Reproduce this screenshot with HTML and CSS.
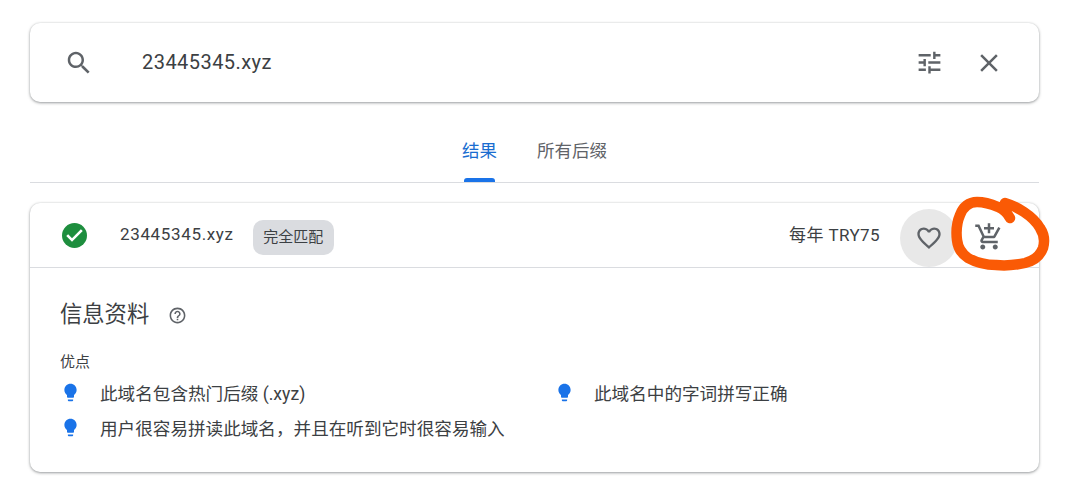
FILE: index.html
```html
<!DOCTYPE html>
<html lang="zh">
<head>
<meta charset="utf-8">
<title>23445345.xyz</title>
<link rel="stylesheet" href="styles.css">
</head>
<body>
<main class="page">
  <section class="search">
    <svg class="icon search-icon" viewBox="0 0 24 24"><path d="M15.5 14h-.79l-.28-.27C15.41 12.59 16 11.11 16 9.5 16 5.91 13.09 3 9.5 3S3 5.91 3 9.5 5.91 16 9.5 16c1.61 0 3.09-.59 4.23-1.57l.27.28v.79l5 4.99L20.49 19l-4.99-5zm-6 0C7.01 14 5 11.99 5 9.5S7.01 5 9.5 5 14 7.01 14 9.5 11.99 14 9.5 14z"/></svg>
    <span class="query">23445345.xyz</span>
    <svg class="icon tune-icon" viewBox="0 0 24 24"><path d="M3 17v2h6v-2H3zM3 5v2h10V5H3zm10 16v-2h8v-2h-8v-2h-2v6h2zM7 9v2H3v2h4v2h2V9H7zm14 4v-2H11v2h10zm-6-4h2V7h4V5h-4V3h-2v6z"/></svg>
    <svg class="icon close-icon" viewBox="0 0 24 24"><path d="M19 6.41L17.59 5 12 10.59 6.41 5 5 6.41 10.59 12 5 17.59 6.41 19 12 13.41 17.59 19 19 17.59 13.41 12z"/></svg>
  </section>

  <nav class="tabs">
    <a class="tab tab-active">结果</a>
    <a class="tab">所有后缀</a>
  </nav>

  <section class="card">
    <header class="result">
      <svg class="check" viewBox="2 2 20 20"><circle cx="12" cy="12" r="10" fill="#1e8e3e"/><path fill="#fff" d="M10 17l-4.6-4.6 1.5-1.4 3.1 3.1 7.1-7.1 1.5 1.4z"/></svg>
      <span class="domain">23445345.xyz</span>
      <span class="chip">完全匹配</span>
      <span class="price">每年 TRY75</span>
      <span class="fav">
        <svg class="icon" viewBox="0 0 24 24"><path d="M16.5 3c-1.74 0-3.41.81-4.5 2.09C10.91 3.81 9.24 3 7.5 3 4.42 3 2 5.42 2 8.5c0 3.78 3.4 6.86 8.55 11.54L12 21.35l1.45-1.32C18.6 15.36 22 12.28 22 8.5 22 5.42 19.58 3 16.5 3zm-4.4 15.55l-.1.1-.1-.1C7.14 14.24 4 11.39 4 8.5 4 6.5 5.5 5 7.5 5c1.54 0 3.04.99 3.57 2.36h1.87C13.46 5.99 14.96 5 16.5 5c2 0 3.5 1.5 3.5 3.5 0 2.89-3.14 5.74-7.9 10.05z"/></svg>
      </span>
      <svg class="icon cart" viewBox="0 0 24 24"><path d="M11 9h2V6h3V4h-3V1h-2v3H8v2h3v3zm-4 9c-1.1 0-1.99.9-1.99 2S5.9 22 7 22s2-.9 2-2-.9-2-2-2zm10 0c-1.1 0-1.99.9-1.99 2s.89 2 1.99 2 2-.9 2-2-.9-2-2-2zm-9.83-3.25l.03-.12.9-1.63h7.45c.75 0 1.41-.41 1.75-1.03l3.86-7.01L19.42 4h-.01l-1.1 2-2.76 5H8.53l-.13-.27L6.16 6l-.95-2-.94-2H1v2h2l3.6 7.59-1.35 2.45c-.16.28-.25.61-.25.96 0 1.1.9 2 2 2h12v-2H7.42c-.13 0-.25-.11-.25-.25z"/></svg>
    </header>
    <div class="info">
      <h2 class="info-title">信息资料
        <svg class="icon help" viewBox="0 0 24 24"><path d="M11 18h2v-2h-2v2zm1-16C6.48 2 2 6.48 2 12s4.48 10 10 10 10-4.48 10-10S17.52 2 12 2zm0 18c-4.41 0-8-3.59-8-8s3.59-8 8-8 8 3.59 8 8-3.59 8-8 8zm0-14c-2.21 0-4 1.79-4 4h2c0-1.1.9-2 2-2s2 .9 2 2c0 2-3 1.75-3 5h2c0-2.25 3-2.5 3-5 0-2.21-1.79-4-4-4z"/></svg>
      </h2>
      <div class="label">优点</div>
      <ul class="points">
        <li class="point"><svg class="bulb" viewBox="0 0 24 24"><path d="M9 21c0 .55.45 1 1 1h4c.55 0 1-.45 1-1v-1H9v1zm3-19C8.14 2 5 5.14 5 9c0 2.38 1.19 4.47 3 5.74V17c0 .55.45 1 1 1h6c.55 0 1-.45 1-1v-2.26c1.81-1.27 3-3.36 3-5.74 0-3.86-3.14-7-7-7z"/></svg>此域名包含热门后缀 (.xyz)</li>
        <li class="point"><svg class="bulb" viewBox="0 0 24 24"><path d="M9 21c0 .55.45 1 1 1h4c.55 0 1-.45 1-1v-1H9v1zm3-19C8.14 2 5 5.14 5 9c0 2.38 1.19 4.47 3 5.74V17c0 .55.45 1 1 1h6c.55 0 1-.45 1-1v-2.26c1.81-1.27 3-3.36 3-5.74 0-3.86-3.14-7-7-7z"/></svg>此域名中的字词拼写正确</li>
        <li class="point"><svg class="bulb" viewBox="0 0 24 24"><path d="M9 21c0 .55.45 1 1 1h4c.55 0 1-.45 1-1v-1H9v1zm3-19C8.14 2 5 5.14 5 9c0 2.38 1.19 4.47 3 5.74V17c0 .55.45 1 1 1h6c.55 0 1-.45 1-1v-2.26c1.81-1.27 3-3.36 3-5.74 0-3.86-3.14-7-7-7z"/></svg>用户很容易拼读此域名，并且在听到它时很容易输入</li>
      </ul>
    </div>
  </section>
</main>
<svg class="scribble" viewBox="0 0 1088 492"><path d="M1010 218C1007 212 1003 209 998 207C991 204 984 202 977 202C969 202 963 207 960 215C957 222 956 232 957 240C958 249 962 254 968 258C977 263 986 265 996 265C1006 266 1016 265 1025 263C1033 261 1040 256 1043 248C1045 241 1044 234 1040 228C1036 221 1030 216 1024 212C1018 208 1012 205 1005 203" fill="none" stroke="#fa5a05" stroke-width="10.5" stroke-linecap="round" stroke-linejoin="round"/></svg>
</body>
</html>
```
FILE: styles.css
```css
* { box-sizing: border-box; }
html, body { margin: 0; padding: 0; height: 100%; background: #fff; overflow: hidden; }
body {
  position: relative;
  color: #3c4043;
  font-family: Roboto, "Noto Sans CJK SC", sans-serif;
}
.page { padding: 23px 49px 0 30px; }
.icon { fill: #5f6368; display: block; flex: none; width: 24px; height: 24px; }

.search {
  display: flex;
  align-items: center;
  height: 79px;
  padding: 0 35px 0 34px;
  border-radius: 10px;
  background: #fff;
  box-shadow: 0 1px 3px rgba(60, 64, 67, .5), 0 0 2px rgba(60, 64, 67, .12);
}
.search-icon { width: 30px; height: 30px; }
.query { margin: -2px 0 0 48px; flex: 1; font-size: 20px; letter-spacing: .45px; }
.tune-icon { width: 29px; height: 29px; margin-right: 30px; }
.close-icon { width: 30px; height: 30px; }

.tabs {
  display: flex;
  justify-content: center;
  gap: 40px;
  height: 81px;
  border-bottom: 1px solid #dadce0;
}
.tab { position: relative; padding-top: 37px; font-size: 17.5px; line-height: 24px; color: #5f6368; }
.tab-active { color: #1a6dd0; }
.tab-active::after {
  content: "";
  position: absolute;
  left: 2px;
  right: 2px;
  bottom: 0;
  height: 4px;
  background: #1a73e8;
  border-radius: 3px 3px 0 0;
}

.card {
  margin-top: 20px;
  height: 269px;
  border-radius: 10px;
  background: #fff;
  box-shadow: 0 1px 3px rgba(60, 64, 67, .5), 0 0 2px rgba(60, 64, 67, .12);
}
.result {
  display: flex;
  align-items: center;
  height: 65px;
  padding: 0 35px 0 32px;
  border-bottom: 1px solid #dadce0;
}
.check { width: 25px; height: 25px; flex: none; }
.domain { margin: -2px 0 0 33px; font-size: 17px; letter-spacing: .65px; }
.chip {
  margin: 5px 0 0 19px;
  padding: 0 10.5px;
  height: 35px;
  line-height: 35px;
  font-size: 15px;
  border-radius: 10px;
  background: #dadce0;
}
.price { margin: -4px 0 0 auto; font-size: 17px; letter-spacing: .4px; }
.fav {
  display: flex;
  align-items: center;
  justify-content: center;
  width: 58px;
  height: 58px;
  margin: 5px 0 0 20px;
  border-radius: 50%;
  background: #e8e8e8;
}
.fav .icon { width: 28px; height: 28px; }
.cart { width: 30px; height: 30px; margin: 4px 0 0 16px; }

.info { padding: 30px 30px 0; }
.info-title {
  display: flex;
  align-items: center;
  gap: 19px;
  margin: 0;
  font-size: 22.3px;
  font-weight: 400;
  line-height: 32px;
}
.help { width: 19px; height: 19px; margin-top: 3px; }
.label { margin-top: 21px; font-size: 15px; line-height: 22px; }
.points {
  display: grid;
  grid-template-columns: 494px 1fr;
  grid-auto-rows: 35px;
  margin: 2px 0 0;
  padding: 0;
  list-style: none;
}
.point { display: flex; align-items: center; font-size: 17.6px; }
.bulb { width: 21px; height: 21px; flex: none; margin: -1px 19px 0 0; fill: #1a73e8; }

.scribble { position: absolute; left: 0; top: 0; width: 1088px; height: 492px; pointer-events: none; }
```
